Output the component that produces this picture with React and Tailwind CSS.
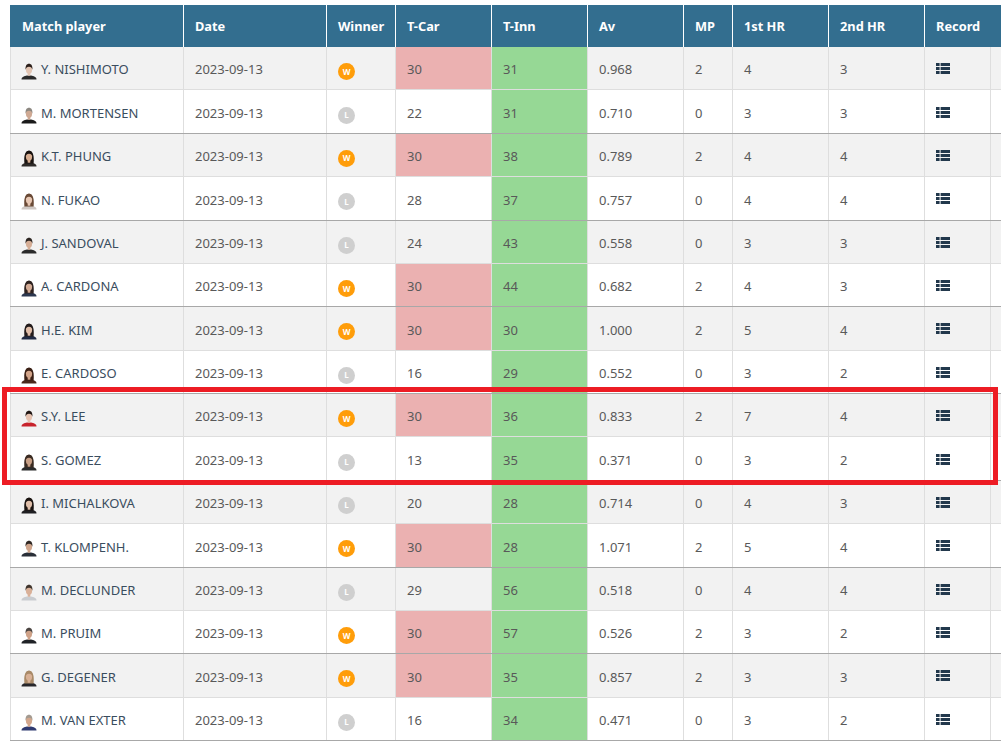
const rows = [
  ["Y. NISHIMOTO", "w", 30, 31, "0.968", 2, 4, 3, "#2b1f1a", "#2a2a2a", "#e2c4b2", 0],
  ["M. MORTENSEN", "l", 22, 31, "0.710", 0, 3, 3, "#8c8780", "#1a1a1a", "#cfa993", 0],
  ["K.T. PHUNG", "w", 30, 38, "0.789", 2, 4, 4, "#1a1310", "#2e2a28", "#d8ae92", 1],
  ["N. FUKAO", "l", 28, 37, "0.757", 0, 4, 4, "#6a4a36", "#cfc8c4", "#e8c8b4", 1],
  ["J. SANDOVAL", "l", 24, 43, "0.558", 0, 3, 3, "#2c2420", "#2a2a2a", "#d6ae96", 0],
  ["A. CARDONA", "w", 30, 44, "0.682", 2, 4, 3, "#2f2320", "#2c3850", "#d4ac96", 1],
  ["H.E. KIM", "w", 30, 30, "1.000", 2, 5, 4, "#231c1c", "#1f2a44", "#e0bda8", 1],
  ["E. CARDOSO", "l", 16, 29, "0.552", 0, 3, 2, "#3a2015", "#4a2a1c", "#d3a58a", 1],
  ["S.Y. LEE", "w", 30, 36, "0.833", 2, 7, 4, "#1f1512", "#c8232c", "#e6c2b0", 0],
  ["S. GOMEZ", "l", 13, 35, "0.371", 0, 3, 2, "#3a2b22", "#2a2a2a", "#c89f85", 1],
  ["I. MICHALKOVA", "l", 20, 28, "0.714", 0, 4, 3, "#1a1310", "#1f1f22", "#e0bfaa", 1],
  ["T. KLOMPENH.", "w", 30, 28, "1.071", 2, 5, 4, "#2e2622", "#2a2f38", "#cfa58c", 0],
  ["M. DECLUNDER", "l", 29, 56, "0.518", 0, 4, 4, "#3f342c", "#c9ccd0", "#d9b098", 0],
  ["M. PRUIM", "w", 30, 57, "0.526", 2, 3, 2, "#4a4440", "#1f2226", "#cfa288", 0],
  ["G. DEGENER", "w", 30, 35, "0.857", 2, 3, 3, "#a98a68", "#27272b", "#d9b196", 1],
  ["M. VAN EXTER", "l", 16, 34, "0.471", 0, 3, 2, "#a39a90", "#2f3a70", "#d3a78d", 0],
];

function Avatar({ hair, shirt, skin, long }) {
  return (
    <svg width="16" height="18" viewBox="0 0 16 18" className="mt-[2px] shrink-0">
      <path d="M0.5 17.500c0-2.600 3-3.600 5.400-4h4.200c2.400.4 5.400 1.400 5.400 4z" fill={shirt} />
      {long ? <path d="M3.400 14.500C2.800 8 3.500 1.800 8 1.800s5.200 6.200 4.600 12.700z" fill={hair} /> : null}
      <ellipse cx="8" cy="7.600" rx="3.100" ry="4.300" fill={skin} />
      <rect x="6.700" y="10.500" width="2.600" height="3.200" fill={skin} />
      <path d="M4.600 7.800C4.200 3.900 5.700 1.800 8 1.800s3.800 2.100 3.400 6c-.5-1.800-1.300-2.900-3.400-3-2.100.1-2.900 1.200-3.400 3z" fill={hair} />
    </svg>
  );
}

function Badge({ kind }) {
  const win = kind === "w";
  return (
    <span
      className={
        "flex h-[17px] w-[17px] items-center justify-center rounded-full text-[8px] leading-none font-bold text-white " +
        (win ? "bg-[#ff9d0a]" : "bg-[#cfcfcf]")
      }
    >
      {win ? "W" : "L"}
    </span>
  );
}

function RecordIcon() {
  return (
    <svg width="14" height="11" viewBox="0 0 14 11" className="fill-[#22384c]">
      <rect x="0" y="0" width="3.600" height="3" />
      <rect x="4.600" y="0" width="9.400" height="3" />
      <rect x="0" y="4" width="3.600" height="3" />
      <rect x="4.600" y="4" width="9.400" height="3" />
      <rect x="0" y="8" width="3.600" height="3" />
      <rect x="4.600" y="8" width="9.400" height="3" />
    </svg>
  );
}

const heads = ["Match player", "Date", "Winner", "T-Car", "T-Inn", "Av", "MP", "1st HR", "2nd HR", "Record"];

const gridCols = "grid grid-cols-[174px_143px_69px_96px_96px_96px_49px_96px_96px_66px]";
const cell = "flex items-center border-r border-[#dedede] pl-[11px]";

export default function App() {
  return (
    <div className="relative h-[755px] w-[1001px] overflow-hidden bg-white pt-[5px] pl-[10px] font-['Noto_Sans','Noto_Sans_CJK_KR',sans-serif] text-[13px] text-[#595959]">
      <div className={gridCols + " h-[42px] bg-[#336e8f] text-[12.800px] font-bold text-white"}>
        {heads.map((h) => (
          <div key={h} className="flex items-center border-r border-white pt-[1px] pl-[11px] whitespace-nowrap first:pl-3 last:border-r-0">
            {h}
          </div>
        ))}
      </div>
      <div className="grid auto-rows-[43.375px]">
        {rows.map((r, i) => {
          const odd = i % 2 === 0;
          return (
            <div
              key={r[0]}
              className={
                gridCols +
                " border-b " +
                (odd ? "border-b-[#dedede] bg-[#f2f2f2]" : "border-b-[#a8a8a8] bg-white")
              }
            >
              <div className="flex items-center gap-1 border-x border-[#dedede] pt-1 pl-[10px] text-[#3a4d5e]">
                <Avatar hair={r[8]} shirt={r[9]} skin={r[10]} long={r[11]} />
                <span className="whitespace-nowrap">{r[0]}</span>
              </div>
              <div className={cell + " pt-1"}>2023-09-13</div>
              <div className={cell + " pt-[7px]"}>
                <Badge kind={r[1]} />
              </div>
              <div className={cell + " pt-1 " + (r[2] === 30 ? "bg-[#ebb1b1]" : "")}>{r[2]}</div>
              <div className={cell + " bg-[#96d895] pt-1"}>{r[3]}</div>
              <div className={cell + " pt-1"}>{r[4]}</div>
              <div className={cell + " pt-1"}>{r[5]}</div>
              <div className={cell + " pt-1"}>{r[6]}</div>
              <div className={cell + " pt-1"}>{r[7]}</div>
              <div className={cell + " pt-[1px]"}>
                <RecordIcon />
              </div>
            </div>
          );
        })}
      </div>
      <div className="absolute top-[387px] left-[2px] h-[98px] w-[996px] border-[5px] border-[#ed1c24]" />
    </div>
  );
}
